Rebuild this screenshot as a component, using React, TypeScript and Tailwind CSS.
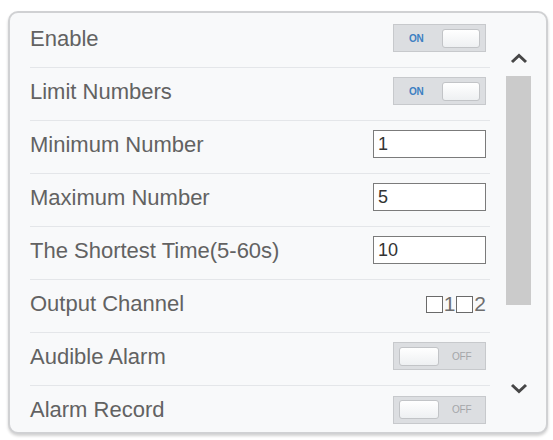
import React from "react";

function Toggle({ on }: { on: boolean }) {
  return (
    <div className="flex h-[28px] w-[93px] items-center border border-[#c7c9cc] bg-[#dcdee1] px-[5px]">
      {on ? (
        <>
          <span className="ml-[10px] text-[10px] font-bold tracking-tight text-[#3d80c2]">ON</span>
          <span className="ml-auto h-[19px] w-[38px] rounded-[3px] border border-[#c2c4c7] bg-gradient-to-b from-white to-[#eef0f2]" />
        </>
      ) : (
        <>
          <span className="h-[19px] w-[40px] rounded-[3px] border border-[#c2c4c7] bg-gradient-to-b from-white to-[#eef0f2]" />
          <span className="ml-[13px] text-[10px] tracking-tight text-[#a4a6a9]">OFF</span>
        </>
      )}
    </div>
  );
}

function NumberBox({ value }: { value: string }) {
  return (
    <input
      readOnly
      value={value}
      className="h-[28px] w-[113px] border border-[#7b7b7b] bg-white pl-[4px] text-[18px] text-[#333] outline-none"
    />
  );
}

function Channels() {
  return (
    <div className="flex items-end text-[21px] leading-none text-[#6e6e6e]">
      <span className="mb-[1px] h-[17px] w-[17px] border border-[#6a6a6a] bg-white" />
      <span className="ml-[1px]">1</span>
      <span className="mb-[1px] ml-[1px] h-[17px] w-[17px] border border-[#6a6a6a] bg-white" />
      <span className="ml-[1px]">2</span>
    </div>
  );
}

function Chevron({ up }: { up?: boolean }) {
  return (
    <svg width="18" height="11" viewBox="0 0 18 11" aria-hidden>
      <path
        d={up ? "M2 9 L9 2.5 L16 9" : "M2 2 L9 8.5 L16 2"}
        stroke="#474747"
        strokeWidth="3"
        fill="none"
      />
    </svg>
  );
}

export default function App() {
  const rows: { label: string; control: React.ReactNode }[] = [
    { label: "Enable", control: <Toggle on /> },
    { label: "Limit Numbers", control: <Toggle on /> },
    { label: "Minimum Number", control: <NumberBox value="1" /> },
    { label: "Maximum Number", control: <NumberBox value="5" /> },
    { label: "The Shortest Time(5-60s)", control: <NumberBox value="10" /> },
    { label: "Output Channel", control: <Channels /> },
    { label: "Audible Alarm", control: <Toggle on={false} /> },
    { label: "Alarm Record", control: <Toggle on={false} /> },
  ];

  return (
    <div className="h-[440px] w-[553px] bg-white pl-[8px] pt-[11px] font-['Liberation_Sans',Arial,sans-serif]">
      <div className="flex h-[423px] w-[540px] overflow-hidden rounded-[10px] border-2 border-[#d0d1d3] bg-[#f8f9fa] shadow-[0_2px_3px_rgba(0,0,0,0.18)]">
        <div className="w-[480px] pl-[20px] pt-[2px]">
          {rows.map((row, i) => (
            <div
              key={row.label}
              className={`flex h-[53px] items-center justify-between pb-[6px] pr-[4px] ${
                i < rows.length - 1 ? "border-b border-[#e4e6e9]" : ""
              }`}
            >
              <span className="text-[22px] text-[#626262]">{row.label}</span>
              {row.control}
            </div>
          ))}
        </div>
        {/* scrollbar */}
        <div className="ml-[16px] flex w-[25px] flex-col items-center pt-[40px]">
          <Chevron up />
          <div className="mt-[12px] h-[229px] w-[25px] bg-[#cbcbcb]" />
          <div className="mt-[78px]">
            <Chevron />
          </div>
        </div>
      </div>
    </div>
  );
}
